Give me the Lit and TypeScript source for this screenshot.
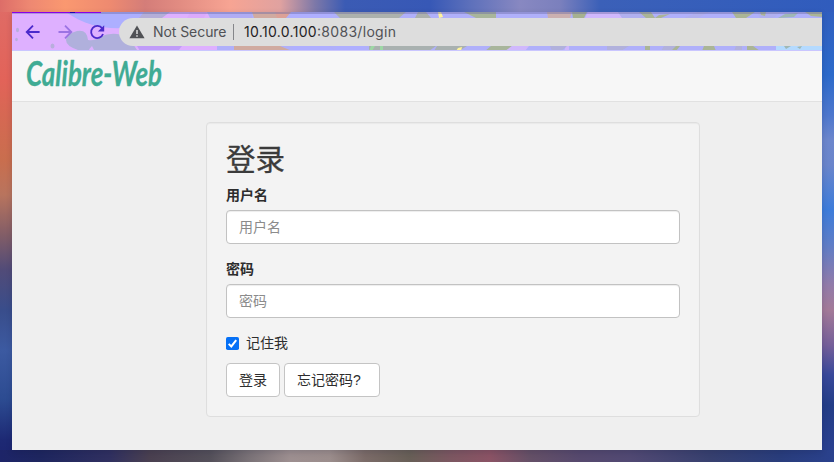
import { LitElement, html, css } from "lit";
import { customElement } from "lit/decorators.js";

@customElement("browser-toolbar")
class BrowserToolbar extends LitElement {
  static styles = css`
    :host { display: flex; position: relative; height: 39px; box-sizing: border-box; padding: 6px 0 5px 107px; overflow: hidden; background: #b0b0fa; font-family: Inter, sans-serif; }
    .art { position: absolute; inset: 0; }
    .nav { position: absolute; left: 0; top: 0; }
    .address { position: relative; flex: 1; height: 28px; border-radius: 14px 0 0 14px; background: #dddddd; display: flex; align-items: center; padding-left: 10px; box-sizing: border-box; font-size: 14px; color: #505155; white-space: nowrap; }
    .warn { flex: none; margin-right: 8px; }
    .sep { width: 1px; height: 16px; background: #85868a; margin: 0 10px 0 6px; }
    text { font-size: 14px; font-family: Inter, sans-serif; }
  `;
  render() {
    return html`
      <svg class="art" width="810" height="39" viewBox="0 0 810 39">
        <rect width="205" height="39" fill="#deb0ff" />
        <path d="M54 0C72 13 91 17 111 16L139 0Z" fill="#adafff" />
        <path d="M132 0h26l-8 6h-23z" fill="#b4aed8" />
        <path d="M54 28q0-6 11-9q10-2 11 9q7 1 12-3q14-7 29 1l8 12H82l-2-4q-3 3-3 4H66q-12-4-12-10z" fill="#b0b0dc" />
        <ellipse cx="5.500" cy="18" rx="1.500" ry="2.300" fill="#b8aedc" />
        <ellipse cx="4.500" cy="27.500" rx="1.300" ry="1.800" fill="#b8aedc" />
        <ellipse cx="40.500" cy="34" rx="2" ry="2.500" fill="#b8aedc" />
        <path d="M125 34h45l-4 5h-38z" fill="#c09bf8" />
        <path d="M178 0h17l-3 6h-17z" fill="#dbaafc" />
        <path d="M195 0h45v6h-42z" fill="#b0acf4" />
        <path d="M240 0h23l9 6h-30zM222 34h46l12 5h-58z" fill="#d0aaa0" />
        <path d="M263 0h16l-5 6h-9z" fill="#dca197" />
        <path d="M322 0h72l-7 6h-59zM406 0h8l5 6h-16z" fill="#acb1ad" />
        <path d="M279 0h42v6h-43zM281 34h36l6 5h-42zM324 34h28v5h-28z" fill="#afafff" />
        <path d="M357 34h67l-7 5h-60zM425 34h30l-8 5h-25z" fill="#a9b1b0" />
        <path d="M359 34h4l-3 5h-3zM368 34h3v5h-3z" fill="#9dd7a5" />
        <path d="M452 0h32v6h-20zM479 34h20l5 5h-31z" fill="#a8b59b" />
        <path d="M426 0h3l2 5-4 1zM446 36l4-1-1 4h-5z" fill="#fff49b" />
        <path d="M535 0h25l-2 6h-22z" fill="#cbb0b0" />
        <path d="M560 0h15l-3 6h-11z" fill="#a6b190" />
        <path d="M576 0h30l5 6h-38zM618 0h10l4 6h-15zM500 34h17l-4 5h-20zM554 34h3v5h-5z" fill="#d0b8fc" />
        <path d="M606 0h22l10 6h-28zM686 0h11l-11 6h-14zM745 0h24l-8 6h-13z" fill="#b0b0ef" />
        <path d="M627 0h12l4 6h-9zM647 3l11-1-9 4h-6zM720 0h23l-9 6h-10zM748 0h6l-1 4-4-1zM793 0h17v5l-11-1zM633 34h5v5h-5zM659 34h9l-4 5h-11zM692 34h10l2 5h-14zM735 34h6l7 5h-13z" fill="#aab596" />
        <path d="M538 34h17l-6 5h-9zM595 34h22l-8 5h-14zM652 34h12l-5 5h-10zM724 34h6v5h-8z" fill="#b1b1dc" />
        <path d="M764 34h46v5h-46z" fill="#b4daff" />
        <path d="M773 2l13-1-4 4-16 1zM772 34h7l-5 3zM785 35l5-1-2 3z" fill="#9fb8b5" />
        <rect width="810" height="2" fill="#6969a5" opacity=".42" />
        <rect width="89" height="1" fill="#8900e8" />
        <rect x="58" width="5" height="1" fill="#2200b5" />
        <rect y="38" width="810" height="1" fill="#cac6ff" />
      </svg>
      <svg class="nav" width="107" height="39" viewBox="0 0 107 39" fill="none" stroke="#4b2acb" stroke-width="1.800">
        <path d="M27.600 20H15.200M21 13.700L14.700 20l6.300 6.300" />
        <path d="M46.500 20h12.400M53 13.700l6.300 6.300-6.300 6.300" stroke="#9b73e3" />
        <path d="M90.200 16.400A6.100 6.100 0 1 0 91 22" />
        <path d="M92.200 13.300v6.300h-6.300z" fill="#4b2acb" stroke="none" />
      </svg>
      <div class="address">
        <svg class="warn" width="16" height="14" viewBox="0 0 16 14">
          <path d="M8 .5L15.600 13.300H.400z" fill="#505155" />
          <path d="M8 5v4M8 10.200v1.600" stroke="#dddddd" stroke-width="1.500" />
        </svg>
        <svg width="74" height="28"><text x="0" y="19" fill="#505155" textLength="73.500">Not Secure</text></svg>
        <span class="sep"></span>
        <svg width="160" height="28"><text x="0" y="19" fill="#505155" textLength="152"><tspan fill="#1f2023">10.10.0.100</tspan>:8083/login</text></svg>
      </div>
    `;
  }
}

@customElement("login-form")
class LoginForm extends LitElement {
  static styles = css`
    :host { display: block; box-sizing: border-box; width: 494px; height: 295px; padding: 19px; border: 1px solid #dedede; border-radius: 4px; background: #f3f3f3; box-shadow: inset 0 1px 1px rgba(0,0,0,.04); font: 14px/20px "Liberation Sans", "Noto Sans CJK SC", sans-serif; color: #2d2d2d; }
    h2 { font-size: 29.5px; line-height: 33px; font-weight: 400; margin: 0 0 10px; padding-top: 1px; height: 32px; color: #3b3b3b; -webkit-text-stroke: .3px #3b3b3b; }
    label { display: block; font-weight: 700; margin-bottom: 5px; height: 20px; }
    input.text { display: block; box-sizing: border-box; width: 100%; height: 34px; border: 1px solid #c2c2c2; border-radius: 4px; background: #fff; padding: 6px 12px; margin: 0 0 15px; font: inherit; color: #555; box-shadow: inset 0 1px 1px rgba(0,0,0,.075); }
    input::placeholder { color: #8b8b8b; opacity: 1; }
    .remember { display: flex; align-items: center; gap: 7px; height: 20px; margin-bottom: 10px; font-weight: 400; }
    .remember svg { display: block; margin-top: 1px; }
    .actions { display: flex; gap: 4px; }
    button { box-sizing: border-box; height: 34px; padding: 0 12px; border: 1px solid #c4c4c4; border-radius: 4px; background: #fff; font: inherit; color: #2d2d2d; white-space: nowrap; text-align: left; }
    .submit { width: 54px; }
    .forgot { width: 96px; }
  `;
  render() {
    return html`
      <h2>登录</h2>
      <label>用户名</label>
      <input class="text" placeholder="用户名" />
      <label>密码</label>
      <input class="text" type="password" placeholder="密码" />
      <label class="remember">
        <svg width="13" height="13" viewBox="0 0 13 13"><rect width="13" height="13" rx="1.800" fill="#0570f6" /><path d="M2.700 6.900l2.600 2.500 4.900-6.200" fill="none" stroke="#fff" stroke-width="2" /></svg>
        <span>记住我</span>
      </label>
      <div class="actions"><button class="submit">登录</button><button class="forgot">忘记密码?</button></div>
    `;
  }
}

@customElement("app-root")
class AppRoot extends LitElement {
  static styles = css`
    :host {
      display: block; box-sizing: border-box; width: 834px; height: 462px; padding: 12px; overflow: hidden;
      background:
        linear-gradient(90deg, #dd6d68 0, #ee8872 30px, #fa9870 65px, #ee8a70 110px, #d47d79 145px, #e28c82 180px, #f7a493 230px, #e0a2a0 280px, #7d78a8 315px, #3b5bb4 345px, #3758b6 430px, #5d70bb 470px, #8888c1 520px, #7b80bd 560px, #3b60b8 600px, #305cbd 834px) 0 0 / 834px 12px no-repeat,
        linear-gradient(90deg, #1d2468 0, #1e265f 40px, #303060 110px, #4a4050 150px, #54505a 210px, #7b7378 250px, #9d8f90 290px, #9b8d8c 330px, #7b6b68 365px, #685f57 410px, #7c5761 450px, #8b5365 490px, #655067 530px, #56496e 580px, #514973 630px, #37406f 710px, #293d7c 780px, #2a418d 834px) 0 450px / 834px 12px no-repeat,
        linear-gradient(180deg, #df6c67 0, #e26359 80px, #d66853 115px, #c96e4e 160px, #b8745e 195px, #825d67 235px, #514b78 270px, #394d8b 310px, #3c5aa1 350px, #2c4b91 400px, #1d2974 440px, #1c246f 462px) 0 0 / 12px 462px no-repeat,
        linear-gradient(180deg, #305cbd 0, #2c6aca 75px, #4d77cd 115px, #6c86cc 140px, #6a85cb 165px, #3d7cda 210px, #5f7dc6 245px, #927ba9 285px, #a37a98 310px, #755f99 345px, #38489a 375px, #233d87 405px, #2b4092 462px) 822px 0 / 12px 462px no-repeat;
    }
    .window { width: 810px; height: 438px; background: #efefef; display: flex; flex-direction: column; box-shadow: 0 2px 6px rgba(10,20,50,.16); }
    browser-toolbar { flex: none; }
    header { flex: none; box-sizing: border-box; height: 51px; background: #f7f7f7; border-bottom: 1px solid #e1e1e1; padding: 5px 0 0 14px; }
    .brand { display: block; overflow: visible; }
    .brand text { font: italic 700 35px Lato, sans-serif; fill: #40ab94; stroke: #40ab94; stroke-width: .3px; stroke-linejoin: round; }
    main { padding: 20px 0 0 194px; }
  `;
  render() {
    return html`
      <div class="window">
        <browser-toolbar></browser-toolbar>
        <header>
          <svg class="brand" width="140" height="38" aria-label="Calibre-Web">
            <text x="0" y="30" textLength="136" lengthAdjust="spacingAndGlyphs">Calibre-Web</text>
          </svg>
        </header>
        <main><login-form></login-form></main>
      </div>
    `;
  }
}
